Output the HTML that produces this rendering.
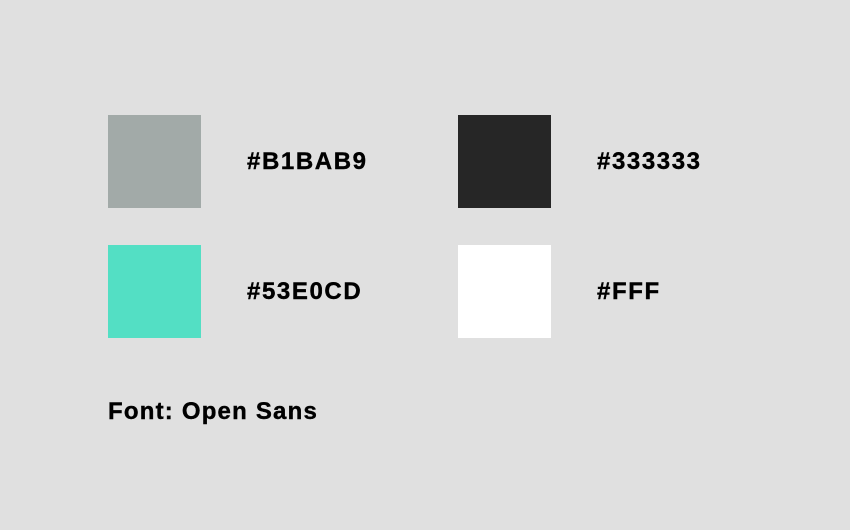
<!DOCTYPE html>
<html><head><style>
body{margin:0;width:850px;height:530px;background:#e0e0e0;position:relative;overflow:hidden;font-family:"Liberation Sans",sans-serif;font-weight:bold;color:#000}
.s{position:absolute;width:93px;height:93px}
.t{position:absolute;font-size:24px;letter-spacing:1.6px;line-height:24px;-webkit-text-stroke:0.4px #000}
</style></head><body>
<div class="s" style="left:108px;top:115px;background:#a2aaa8"></div>
<div class="s" style="left:458px;top:115px;background:#262626"></div>
<div class="s" style="left:108px;top:245px;background:#53dfc4"></div>
<div class="s" style="left:458px;top:245px;background:#fff"></div>
<div class="t" style="left:247px;top:150px">#B1BAB9</div>
<div class="t" style="left:597px;top:150px">#333333</div>
<div class="t" style="left:247px;top:280px">#53E0CD</div>
<div class="t" style="left:597px;top:280px">#FFF</div>
<div class="t" style="left:108px;top:400px;letter-spacing:1.2px">Font: Open Sans</div>
</body></html>
